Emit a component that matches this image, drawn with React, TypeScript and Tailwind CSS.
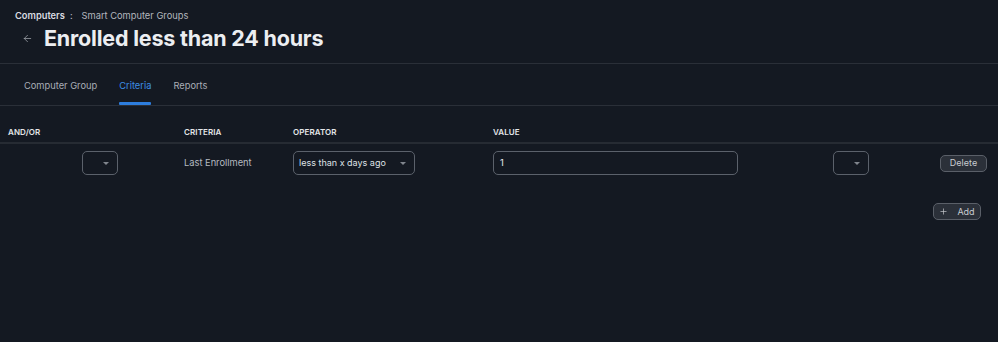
import React from "react";
import { ArrowLeft, Plus } from "lucide-react";

const Caret = () => (
  <span className="w-0 h-0 border-x-[3px] border-x-transparent border-t-[3px] border-t-[#80858d]" />
);

const SmallSelect = ({ className = "" }: { className?: string }) => (
  <div
    className={`h-6 w-9 rounded-[5px] border border-[#5b616b] flex items-center justify-end pr-[8px] ${className}`}
  >
    <Caret />
  </div>
);

const App = () => {
  return (
    <div className="w-[998px] h-[342px] bg-[#141922] text-[#d5d8dd] overflow-hidden font-['Inter',sans-serif]">
      <header className="h-16 border-b border-[#2a2f38] pl-[15px] pt-[10px]">
        <div className="flex items-center text-[9.3px] leading-3">
          <span className="font-semibold text-[#d9dce0]">Computers</span>
          <span className="ml-[5px] text-[#b7bbc1]">:</span>
          <span className="ml-[9px] text-[#b3b7be]">Smart Computer Groups</span>
        </div>
        <div className="flex items-center mt-[2px]">
          <ArrowLeft size={11} strokeWidth={1.5} className="ml-[7px] text-[#aeb2b9]" />
          <h1 className="ml-[11px] text-[21.5px] leading-7 font-bold text-[#eceef1] tracking-[-0.2px]">
            Enrolled less than 24 hours
          </h1>
        </div>
      </header>

      <nav className="h-[42px] border-b border-[#2a2f38] flex gap-[22px] pl-[24px] text-[9.3px]">
        <div className="pt-[15px] text-[#a9aeb6]">Computer Group</div>
        <div className="relative pt-[15px] text-[#3d8ee6]">
          Criteria
          <span className="absolute left-0 right-0 bottom-0 h-[3px] bg-[#2d7ddd] rounded-[1px]" />
        </div>
        <div className="pt-[15px] text-[#a9aeb6]">Reports</div>
      </nav>

      <div className="grid grid-cols-[168px_101px_192px_332px_99px_1fr] gap-x-2 pl-2 h-[38px] items-end pb-[4px] border-b-2 border-[#262b33] text-[8px] font-semibold text-[#e4e6e9] tracking-[0.1px]">
        <div>AND/OR</div>
        <div>CRITERIA</div>
        <div>OPERATOR</div>
        <div>VALUE</div>
        <div />
        <div />
      </div>

      <div className="grid grid-cols-[168px_101px_192px_332px_99px_1fr] gap-x-2 pl-2 pt-[7px] items-center text-[9.3px]">
        <div>
          <SmallSelect className="ml-[74px]" />
        </div>
        <div className="text-[#b5b9c0]">Last Enrollment</div>
        <div className="h-6 w-[122px] rounded-[5px] border border-[#5b616b] flex items-center justify-between pl-[5px] pr-[8px] text-[9px] text-[#dfe1e5] whitespace-nowrap">
          <span>less than x days ago</span>
          <Caret />
        </div>
        <div className="h-6 w-[245px] rounded-[5px] border border-[#5b616b] flex items-center pl-[6px] text-[#e5e7ea]">
          1
        </div>
        <div>
          <SmallSelect />
        </div>
        <div>
          <button className="h-[17px] w-[47px] rounded-[5px] border border-[#5a5f68] bg-[#2b3039] text-[9px] text-[#c9ccd1]">
            Delete
          </button>
        </div>
      </div>

      <div className="flex justify-end pr-[17px] pt-[28px]">
        <button className="h-[17px] w-[48px] rounded-[5px] border border-[#5a5f68] bg-[#2b3039] text-[9px] text-[#c9ccd1] flex items-center justify-center gap-[9px]">
          <Plus size={9} strokeWidth={1.8} />
          <span>Add</span>
        </button>
      </div>
    </div>
  );
};

export default App;
